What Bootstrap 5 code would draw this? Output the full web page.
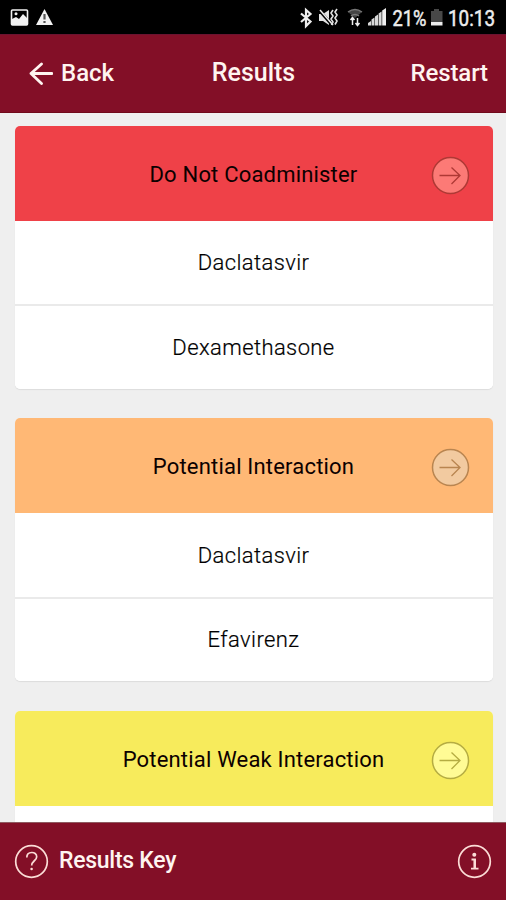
<!DOCTYPE html>
<html lang="en">
<head>
<meta charset="utf-8">
<meta name="viewport" content="width=device-width, initial-scale=1">
<title>Results</title>
<link href="https://cdn.jsdelivr.net/npm/bootstrap@5.3.0/dist/css/bootstrap.min.css" rel="stylesheet">
<style>
  body { font-family: Roboto, "Noto Sans", sans-serif; background: #efefef; color: #1a1a1a; }
  .app { height: 900px; }
  .status-bar { height: 34px; background: #000; }
  .app-bar { height: 79px; background: #830f27; color: #fff4f0; font-size: 24px; font-weight: 500; line-height: 28px; padding: 0 18px 2px 29px; border-bottom: 1px solid #700a1b; border-top: 1px solid #6c1330; }
  .bar-text { color: #fff4f0; text-decoration: none; }
  .bar-title { font-size: 25px; margin-right: 10px; flex: none; }
  .bar-end { letter-spacing: -.1px; }
  .results { padding: 12.7px 13.5px 0 14.5px; gap: 29.3px; }
  .result-card { border: 0; border-radius: 5px; flex: none; box-shadow: 0 1px 1px rgba(0,0,0,.08); overflow: hidden; }
  .result-head { height: 95px; color: #0c0000; font-size: 22px; letter-spacing: .19px; padding-top: 2px; position: relative; }
  .result-row { height: 83.4px; font-size: 22px; letter-spacing: .4px; padding: 1px 0 0; border: 0; color: #000; font-weight: 300; -webkit-text-stroke: .2px #000; }
  .result-row + .result-row { height: 84.8px; padding-top: 0; border-top: 2px solid #eaeaea; }
  .go { position: absolute; right: 23px; top: 30px; }
  .red { background: #ef4148; } .orange { background: #ffb875; } .yellow { background: #f7eb5c; }
  .foot-bar { height: 78px; background: #830f27; border-top: 1px solid #8f5a60; padding: 0 14px 1px 14px; font-size: 23px; font-weight: 500; color: #fff4f0; flex: none; }
  .key-label { margin-left: 10px; letter-spacing: -.27px; }
</style>
</head>
<body>
<div class="app d-flex flex-column overflow-hidden">
  <div class="status-bar d-flex flex-shrink-0">
    <svg width="250" height="34" viewBox="0 0 250 34">
      <rect x="11.5" y="10" width="16" height="15" rx="1" fill="#000" stroke="#f2f2f2" stroke-width="1.6"/>
      <path d="M12 19l4-2 3 2 4-5 4 4v7H12z" fill="#f2f2f2"/><circle cx="16" cy="13.7" r="1.5" fill="#f2f2f2"/>
      <path d="M44.5 9L53 25H36z" fill="#f2f2f2"/><path d="M44.5 14v5.500M44.500 21v2" stroke="#555" stroke-width="2.200"/>
    </svg>
    <svg width="137" height="34" viewBox="250 0 137 34" fill="none">
      <path d="M301 13.500l9.500 8-4.500 4.500V10l4.500 4-9.500 8" stroke="#eee" stroke-width="2.200"/>
      <path d="M319 14h4l6-4v15l-6-4h-4z" fill="#e4e4e4"/>
      <path d="M319 10l14 16" stroke="#000" stroke-width="3"/><path d="M320 10l13 15" stroke="#eee" stroke-width="1.500"/>
      <path d="M333 10l-2 3 2 3-2 3 2 3-1.500 3M337 9l-2 3 2 3-2 3 2 3-2 3.500" stroke="#e4e4e4" stroke-width="1.600"/>
      <path d="M348 12q7-5 14 0l-7 6z" fill="#444"/><path d="M348 12q7-5 14 0M351 16q4-3 8 0" stroke="#777" stroke-width="1.500"/>
      <path d="M352.500 17.500V25M350.500 20l2-2.500 2 2.500M357.500 18V25.500M355.500 23l2 2.500 2-2.500" stroke="#eee" stroke-width="1.500"/>
      <path d="M368 25.500v-2.500l3-2v4.500zM371.500 25.500v-6l3-2v8zM375 25.500V16.500l3-2v11zM378.600 25.500V13.500l3-2v14z" fill="#d8d8d8"/><path d="M382.200 25.500V10.500l3.800-2.500v17.500z" fill="#eee"/>
    </svg>
    <svg width="119" height="34" viewBox="387 0 119 34" font-family="Roboto, sans-serif" font-size="22" fill="#ededed" stroke="#ededed" stroke-width=".5">
      <text x="392.500" y="25.500" textLength="34" lengthAdjust="spacingAndGlyphs">21%</text>
      <path d="M434 9h5v2h3.500v11H431V11h3z" fill="#484848" stroke="none"/><path d="M431 22h11.500v3.500H431z" stroke="none"/>
      <text x="448" y="25.500" textLength="47" lengthAdjust="spacingAndGlyphs">10:13</text>
    </svg>
  </div>

  <header class="app-bar d-flex align-items-center flex-shrink-0">
    <a href="#" class="bar-text d-flex align-items-center col">
      <svg class="me-2" width="24" height="24" viewBox="0 0 24 24" fill="none" stroke="#fff4f0" stroke-width="2.800" stroke-linecap="round" stroke-linejoin="round"><path d="M23 12.500H2M12.500 3L2 12.500 12.500 22.500"/></svg>Back
    </a>
    <div class="bar-title">Results</div>
    <div class="bar-end col text-end"><a href="#" class="bar-text">Restart</a></div>
  </header>

  <main class="results d-flex flex-column flex-fill overflow-hidden">
    <section class="card result-card">
      <div class="result-head red d-flex align-items-center justify-content-center"><span>Do Not Coadminister</span>
        <svg class="go" width="39" height="39" viewBox="0 0 39 39" fill="none" stroke="#ae3935" stroke-width="1.500"><circle cx="19.500" cy="19.500" r="18" fill="#fc7a76"/><path stroke-width="1.300" d="M8.500 19.500H29M20.500 11.500l8.500 8-8.500 8.500"/></svg>
      </div>
      <div class="list-group list-group-flush">
        <div class="list-group-item result-row d-flex align-items-center justify-content-center"><span>Daclatasvir</span></div>
        <div class="list-group-item result-row d-flex align-items-center justify-content-center"><span>Dexamethasone</span></div>
      </div>
    </section>
    <section class="card result-card">
      <div class="result-head orange d-flex align-items-center justify-content-center"><span>Potential Interaction</span>
        <svg class="go" width="39" height="39" viewBox="0 0 39 39" fill="none" stroke="#b98550" stroke-width="1.500"><circle cx="19.500" cy="19.500" r="18" fill="#f2caa0"/><path stroke-width="1.300" d="M8.500 19.500H29M20.500 11.500l8.500 8-8.500 8.500"/></svg>
      </div>
      <div class="list-group list-group-flush">
        <div class="list-group-item result-row d-flex align-items-center justify-content-center"><span>Daclatasvir</span></div>
        <div class="list-group-item result-row d-flex align-items-center justify-content-center"><span>Efavirenz</span></div>
      </div>
    </section>
    <section class="card result-card">
      <div class="result-head yellow d-flex align-items-center justify-content-center"><span>Potential Weak Interaction</span>
        <svg class="go" width="39" height="39" viewBox="0 0 39 39" fill="none" stroke="#b5ac42" stroke-width="1.500"><circle cx="19.500" cy="19.500" r="18" fill="#fffb95"/><path stroke-width="1.300" d="M8.500 19.500H29M20.500 11.500l8.500 8-8.500 8.500"/></svg>
      </div>
      <div class="list-group list-group-flush">
        <div class="list-group-item result-row"></div>
      </div>
    </section>
  </main>

  <footer class="foot-bar d-flex align-items-center justify-content-between">
    <div class="d-flex align-items-center">
      <svg width="35" height="35" viewBox="0 0 35 35" fill="none" stroke="#fbdcd6" stroke-width="1.700"><circle cx="17.500" cy="17.500" r="15.800"/><path d="M12.800 13.500c0-6.500 9.900-6.500 9.900-.8 0 4-5 4.200-5 8.800"/><circle cx="17.600" cy="25" r="1.300" fill="#fbdcd6" stroke="none"/></svg>
      <span class="key-label">Results Key</span>
    </div>
    <svg width="35" height="35" viewBox="0 0 35 35" fill="none" stroke="#fbdcd6" stroke-width="1.700"><circle cx="17.500" cy="17.500" r="15.800"/><circle cx="17.300" cy="10.800" r="2" fill="#fbdcd6" stroke="none"/><path d="M14.500 15.500h3.500v9M14 24.700h7.500" stroke-width="1.800"/><path d="M17.700 15v9.500" stroke-width="2.500"/></svg>
  </footer>
</div>
<script src="https://cdn.jsdelivr.net/npm/bootstrap@5.3.0/dist/js/bootstrap.bundle.min.js"></script>
</body>
</html>
